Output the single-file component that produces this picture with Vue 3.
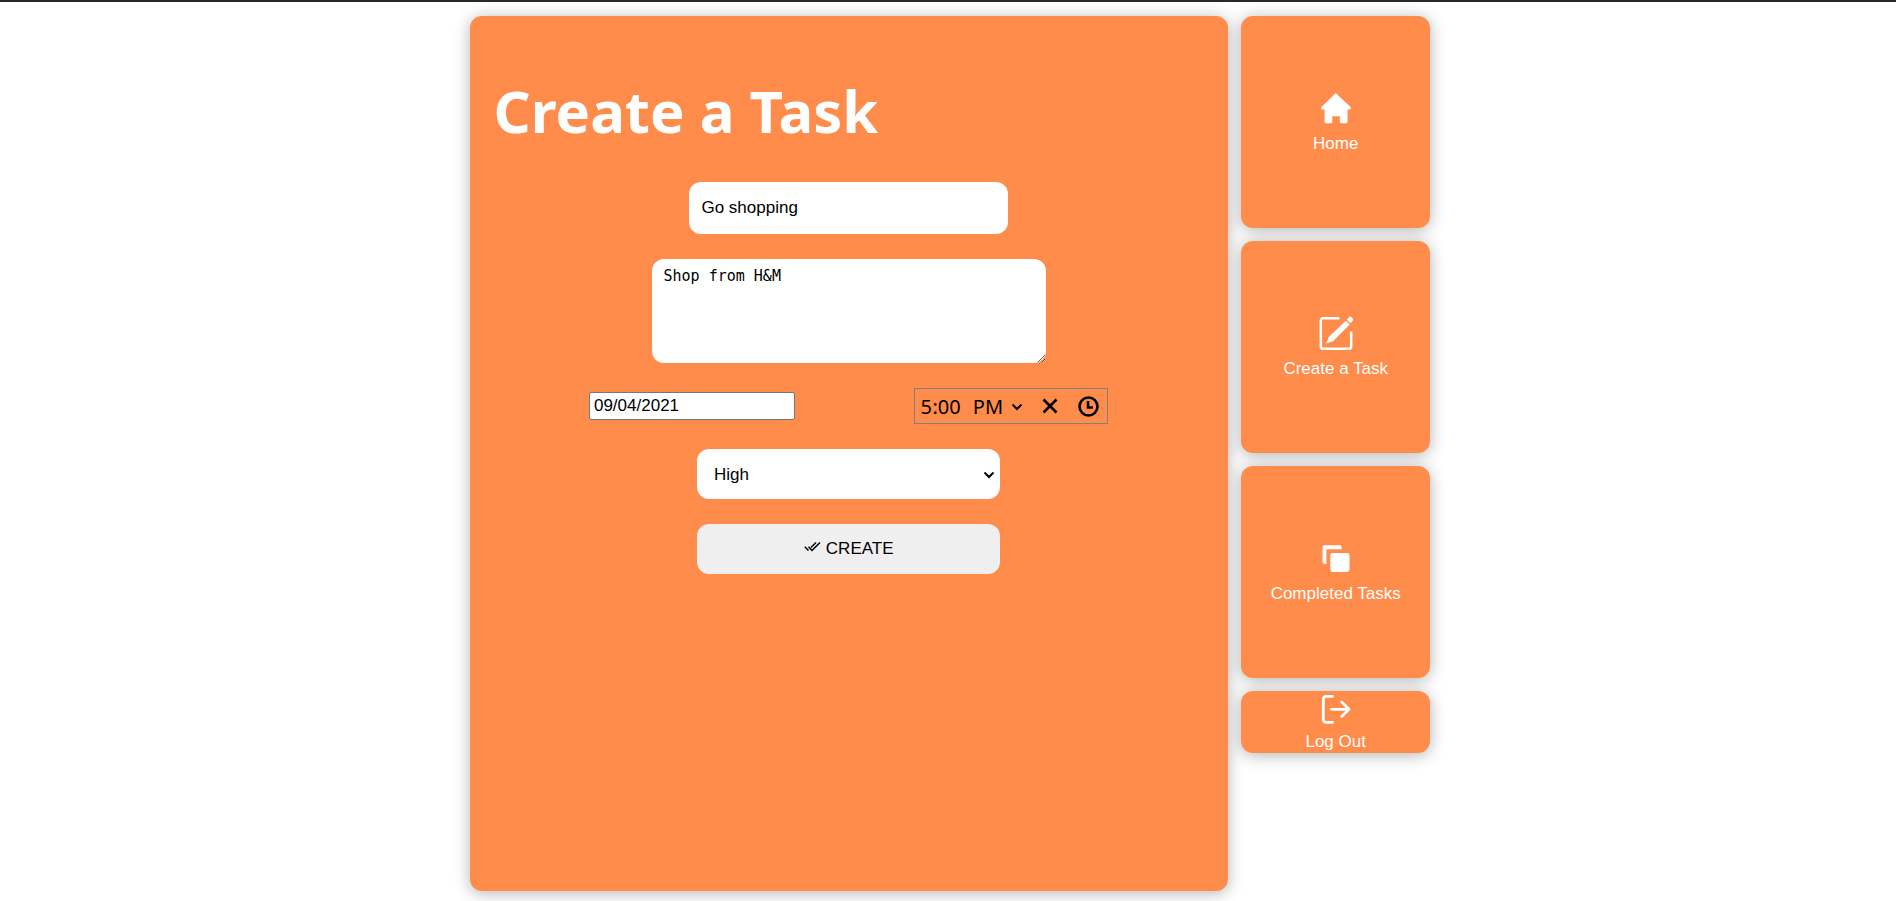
<script setup>
import { ref } from 'vue'

const title = ref('Go shopping')
const details = ref('Shop from H&M')
const date = ref('09/04/2021')
const hour = ref('5')
const minute = ref('00')
const period = ref('PM')
const priority = ref('High')

function clearTime() {
  hour.value = ''
  minute.value = ''
}
</script>

<template>
  <div class="page">
    <main class="card panel">
      <h1>Create a Task</h1>
      <form @submit.prevent>
        <input v-model="title" class="field title" type="text" aria-label="Title" />
        <textarea v-model="details" class="field details" aria-label="Description"></textarea>
        <div class="when">
          <input v-model="date" class="date" type="text" aria-label="Date" />
          <div class="time">
            <input v-model="hour" class="hour" type="text" aria-label="Hour" /><span>:</span><input v-model="minute" class="minute" type="text" aria-label="Minute" />
            <div class="period">
              <select v-model="period" aria-label="AM or PM">
                <option>AM</option>
                <option>PM</option>
              </select>
              <svg class="chevron" viewBox="0 0 12 8"><path d="M1.5 1.5 6 6l4.5-4.5" /></svg>
            </div>
            <button type="button" aria-label="Clear time" @click="clearTime">
              <svg class="time-icon" viewBox="0 0 22 22"><path d="M4.5 3.500l13 13M17.500 3.500l-13 13" /></svg>
            </button>
            <button type="button" aria-label="Pick time">
              <svg class="time-icon" viewBox="0 0 22 22"><circle cx="11.500" cy="10.500" r="9" /><path d="M11 5v6.500h5" /></svg>
            </button>
          </div>
        </div>
        <div class="priority">
          <select v-model="priority" class="field" aria-label="Priority">
            <option>High</option>
            <option>Medium</option>
            <option>Low</option>
          </select>
          <svg class="chevron" viewBox="0 0 12 8"><path d="M1.5 1.5 6 6l4.5-4.5" /></svg>
        </div>
        <button class="field create" type="submit">
          <svg viewBox="0 0 17 17"><path d="M.8 5.800 4.500 9.500M4.500 5.800 8 9.500 16 1.500M7 6.500 12 1.500" /></svg>
          CREATE
        </button>
      </form>
    </main>

    <nav class="side">
      <a class="card tile" href="#home">
        <svg viewBox="0 0 34 34"><path class="solid" d="M17 2.200 31.500 16c.8.9.3 2.400-.9 2.400H28.500V31c0 .8-.5 1.300-1.300 1.300H22c-.7 0-1.200-.5-1.200-1.200V25.200H13.300v5.900c0 .7-.5 1.200-1.200 1.200H6.900c-.8 0-1.300-.5-1.300-1.300V18.400H3.400c-1.200 0-1.700-1.500-.9-2.400L16 2.700c.4-.5.700-.5 1-.5z" /></svg>
        <span>Home</span>
      </a>
      <a class="card tile" href="#create">
        <svg viewBox="0 0 34 34">
          <path d="M20.500 2.300H4.200Q1.800 2.300 1.800 4.700V30.300Q1.800 32.700 4.200 32.700H29.800Q32.200 32.700 32.200 30.300V15.500" stroke-width="2.500" />
          <path class="solid" d="M26.800 4.800 30.700 8.600 14 25.200 7.300 27.500 9.700 20.900zM27.700 3.700 30.500.8Q31.200.1 31.900.8L34 2.900Q34.600 3.600 34 4.300L31.600 7.300z" />
        </svg>
        <span>Create a Task</span>
      </a>
      <a class="card tile" href="#completed">
        <svg viewBox="0 0 34 34">
          <path class="solid" d="M5.700 4.300H20.500Q22.700 4.300 22.700 6.500V8.200H7.400V23H5.700Q3.500 23 3.500 20.800V6.500Q3.500 4.300 5.700 4.300z" />
          <rect class="solid" x="11.300" y="12" width="19.200" height="19" rx="2.400" />
        </svg>
        <span>Completed Tasks</span>
      </a>
      <a class="card tile logout" href="#logout">
        <svg viewBox="0 0 34 34">
          <path d="M13.500 4.300H7.300Q4.300 4.300 4.300 7.300V27.300Q4.300 30.300 7.300 30.300H13.500M12.500 17.300H30M22.700 10 30 17.300 22.700 24.600" stroke-width="2.800" stroke-linecap="round" stroke-linejoin="round" />
        </svg>
        <span>Log Out</span>
      </a>
    </nav>
  </div>
</template>

<style>
body {
  margin: 0;
  background: #fff;
}
</style>

<style scoped>
* {
  box-sizing: border-box;
}

.page {
  display: flex;
  justify-content: center;
  align-items: flex-start;
  gap: 13px;
  padding: 14px 0 10px 4px;
  border-top: 2px solid #2a2829;
  font-family: "Liberation Sans", Arial, sans-serif;
  font-size: 17px;
}

.card {
  background: #ff8c4b;
  border-radius: 12px;
  box-shadow: 0 2px 16px rgba(0, 0, 0, 0.3);
}

.panel {
  width: 40vw;
  min-height: calc(100vh - 26px);
}

h1 {
  margin: 0;
  padding: 52px 24px 28px;
  color: #fff;
  font: bold 58px/86px "Noto Sans", "Open Sans", sans-serif;
}

form {
  display: flex;
  flex-direction: column;
  align-items: center;
  gap: 25px;
}

input,
select,
textarea,
button {
  margin: 0;
  color: #000;
  font: inherit;
}

.field {
  border: 0;
  border-radius: 12px;
  background: #fff;
}

.title {
  width: 42%;
  height: 52px;
  padding: 0 12px;
}

.details {
  width: 52%;
  height: 104px;
  padding: 8px 12px;
  font: 15px/18px "DejaVu Sans Mono", monospace;
  resize: both;
}

.when {
  display: flex;
  justify-content: space-evenly;
  align-items: center;
  width: 100%;
  height: 36px;
}

.date {
  width: 206px;
  height: 28px;
  padding: 0 4px;
  border: 1px solid #767676;
  border-radius: 2px;
  background: #fff;
}

.time {
  display: flex;
  align-items: center;
  width: 194px;
  height: 36px;
  padding: 1px 0 0 5px;
  border: 1px solid #808080;
  font: 20px/26px "Noto Sans", "Open Sans", sans-serif;
}

.time input,
.time button,
.time select {
  padding: 0;
  border: 0;
  background: none;
}

.hour {
  width: 12px;
}

.minute {
  width: 24px;
}

.period {
  display: flex;
  align-items: center;
  gap: 8px;
  margin: 0 8px 0 11px;
}

.period select {
  width: 30px;
  appearance: none;
}

.time button {
  display: flex;
  width: 38px;
  justify-content: center;
}

.time-icon {
  width: 22px;
  height: 22px;
  stroke-width: 2.6;
}

svg {
  display: block;
  flex: none;
  fill: none;
  stroke: currentColor;
}

.chevron {
  width: 12px;
  height: 8px;
  stroke-width: 2;
  pointer-events: none;
}

.priority {
  position: relative;
  width: 40%;
}

.priority select {
  display: block;
  width: 100%;
  height: 50px;
  padding: 0 17px;
  appearance: none;
}

.priority .chevron {
  position: absolute;
  top: 22px;
  right: 5px;
}

.create {
  display: flex;
  align-items: center;
  justify-content: center;
  gap: 5px;
  width: 40%;
  height: 50px;
  background: #efefef;
}

.create svg {
  width: 17px;
  height: 17px;
  stroke-width: 1.5;
}

.side {
  display: flex;
  flex-direction: column;
  gap: 13px;
  width: 10vw;
}

.tile {
  display: flex;
  flex-direction: column;
  align-items: center;
  justify-content: center;
  gap: 9px;
  min-height: 212px;
  color: #fff;
  line-height: 20px;
  text-decoration: none;
}

.tile svg {
  width: 34px;
  height: 34px;
}

.tile .solid {
  fill: currentColor;
  stroke: none;
}

.logout {
  gap: 6px;
  min-height: 62px;
}
</style>
